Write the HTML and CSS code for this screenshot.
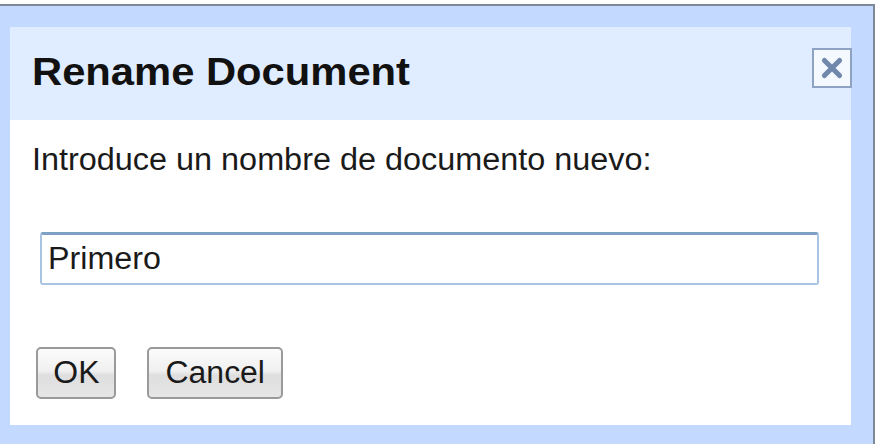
FILE: index.html
```html
<!DOCTYPE html>
<html lang="es">
<head>
<meta charset="utf-8">
<title>Rename Document</title>
<link rel="stylesheet" href="styles.css">
</head>
<body>
<div class="frame">
  <div class="dialog">
    <div class="dialog-head">
      <h1 class="dialog-title"><span class="wide wide-title">Rename Document</span></h1>
      <button class="close-btn" type="button" aria-label="Close">
        <svg viewBox="0 0 24 24" width="26" height="26">
          <path d="M5 5 L19 19 M19 5 L5 19" stroke="#6f87ab" stroke-width="4.6" stroke-linecap="round" fill="none"/>
        </svg>
      </button>
    </div>
    <div class="dialog-body">
      <p class="prompt"><span class="wide wide-prompt">Introduce un nombre de documento nuevo:</span></p>
      <div class="name-field"><span class="wide wide-field">Primero</span></div>
      <div class="actions">
        <button class="btn btn-ok" type="button"><span class="wide wide-btn">OK</span></button>
        <button class="btn btn-cancel" type="button"><span class="wide wide-btn">Cancel</span></button>
      </div>
    </div>
  </div>
</div>
</body>
</html>
```
FILE: styles.css
```css
html, body {
  margin: 0;
  padding: 0;
  background: #ffffff;
}

body {
  font-family: "Liberation Sans", Arial, sans-serif;
  width: 879px;
  height: 444px;
  overflow: hidden;
}

/* light blue outer frame of the dialog */
.frame {
  box-sizing: border-box;
  margin-top: 4px;
  width: 875px;
  height: 440px;
  background: #c3d9ff;
  border-top: 2px solid #7d8899;
  border-right: 2px solid #7d8899;
  padding: 21px 22px 19px 10px;
}

.dialog {
  background: #ffffff;
  height: 100%;
  display: flex;
  flex-direction: column;
}

/* the UI text renders slightly wider than the stock face */
.wide {
  display: inline-block;
  transform-origin: left center;
}

.wide-title { transform: scaleX(1.07); }
.wide-prompt { transform: scaleX(1.045); }
.wide-field { transform: scaleX(1.04); }
.wide-btn { transform: scaleX(1.03); transform-origin: center; }

.dialog-head {
  height: 93px;
  background: #e0ecff;
  display: flex;
  align-items: flex-start;
  justify-content: space-between;
  padding: 0 0 0 22px;
}

.dialog-title {
  margin: 23px 0 0 0;
  font-size: 39px;
  line-height: 44px;
  font-weight: bold;
  color: #111111;
}

.close-btn {
  box-sizing: border-box;
  width: 40px;
  height: 40px;
  margin: 21px -1px 0 0;
  padding: 0;
  border: 2px solid #8ea2c2;
  background: #f4f8ff;
  display: flex;
  align-items: center;
  justify-content: center;
}

.dialog-body {
  flex: 1;
  padding: 22px 0 0 22px;
  display: flex;
  flex-direction: column;
}

.prompt {
  margin: 0;
  font-size: 31px;
  color: #1a1a1a;
}

.name-field {
  box-sizing: border-box;
  margin: 54px 0 0 8px;
  width: 779px;
  height: 53px;
  border: 2px solid #a9c4e2;
  border-top: 3px solid #7fa0c6;
  border-radius: 3px;
  padding: 0 0 0 6px;
  display: flex;
  align-items: center;
  font-size: 31px;
  color: #1a1a1a;
  background: #ffffff;
}

.actions {
  display: flex;
  gap: 31px;
  margin: 62px 0 0 4px;
}

.btn {
  box-sizing: border-box;
  height: 52px;
  border: 2px solid #9a9a9a;
  border-radius: 5px;
  background: linear-gradient(#fbfbfb 0%, #f0f0f0 45%, #dedede 55%, #e6e6e6 100%);
  font-family: "Liberation Sans", Arial, sans-serif;
  font-size: 31px;
  color: #1a1a1a;
  padding: 0;
  display: flex;
  align-items: center;
  justify-content: center;
}

.btn-ok {
  width: 80px;
}

.btn-cancel {
  width: 136px;
}
```
